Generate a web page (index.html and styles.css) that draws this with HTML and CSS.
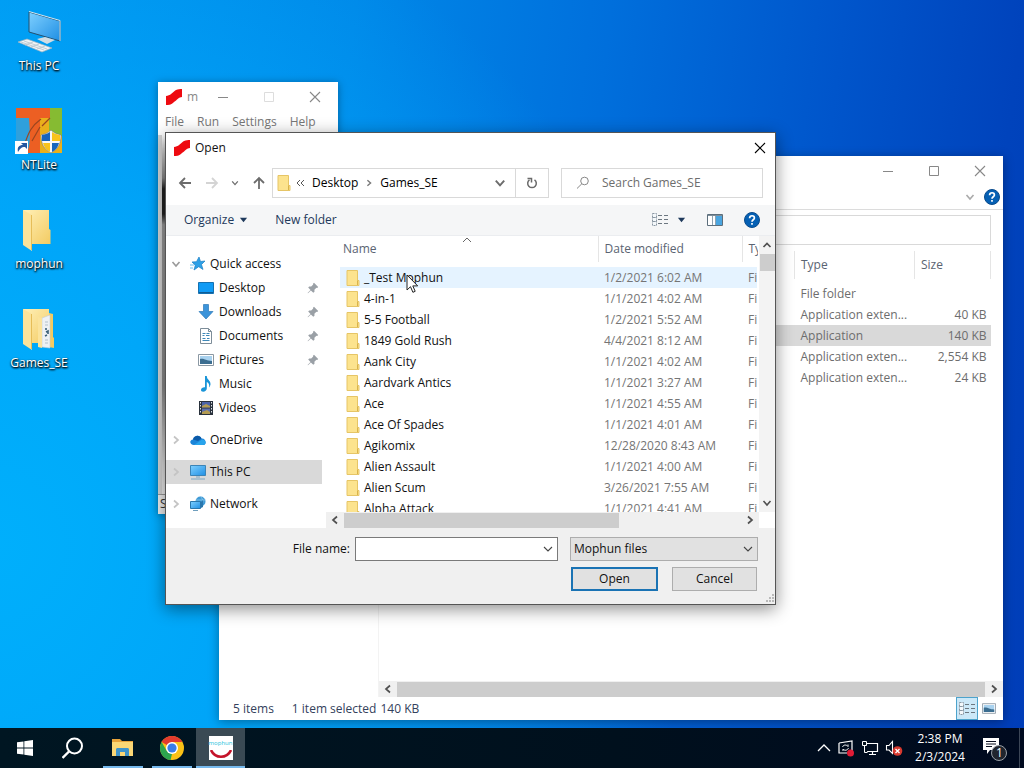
FILE: index.html
```
<!DOCTYPE html>
<html lang="en">
<head>
  <meta charset="UTF-8" />
  <meta name="viewport" content="width=device-width, initial-scale=1.0">
  <title>Open</title>
  <link rel="stylesheet" href="styles.css">
</head>
<body>
  <!-- shared icons -->
  <svg class="defs" aria-hidden="true">
    <defs>
      <linearGradient id="gFolder" x1="0" y1="0" x2="1" y2="1"><stop offset="0" stop-color="#fff0b8"/><stop offset="1" stop-color="#f3cb62"/></linearGradient>
      <linearGradient id="gScreen" x1="0" y1="0" x2="1" y2="1"><stop offset="0" stop-color="#7fd0ff"/><stop offset="1" stop-color="#1f8fe4"/></linearGradient>
    </defs>
    <symbol id="i-folder" viewBox="0 0 14 16"><path d="M1 .5h10.500v10h1.500v5H1z" fill="#fce38e" stroke="#e6c566"/><path d="M11.500 10.500V15" stroke="#d9b34a"/></symbol>
    <symbol id="i-mophun" viewBox="0 0 18 18"><path d="M1 8c4 0 7-4 10-6 2-1 4-1 6-1v8c-3 0-5 3-8 5-3 3-5 3-8 3z" fill="#ee0a10"/></symbol>
    <symbol id="i-close" viewBox="0 0 12 12"><path d="M1 1l10 10M11 1L1 11" fill="none" stroke="currentColor" stroke-width="1.100"/></symbol>
    <symbol id="i-min" viewBox="0 0 12 12"><path d="M1 6.500h10" stroke="currentColor"/></symbol>
    <symbol id="i-max" viewBox="0 0 12 12"><path d="M1.500 1.500h9v9h-9z" fill="none" stroke="currentColor"/></symbol>
    <symbol id="i-down" viewBox="0 0 10 10"><path d="M1.500 3l3.500 4 3.500-4" fill="none" stroke="currentColor" stroke-width="1.600"/></symbol>
    <symbol id="i-thin" viewBox="0 0 10 10"><path d="M1 3l4 4 4-4" fill="none" stroke="currentColor" stroke-width="1.100"/></symbol>
    <symbol id="i-up" viewBox="0 0 10 10"><path d="M1.500 7L5 3.500 8.500 7" fill="none" stroke="currentColor" stroke-width="1.700"/></symbol>
    <symbol id="i-left" viewBox="0 0 10 10"><path d="M7 1.500L3 5l4 3.500" fill="none" stroke="currentColor" stroke-width="1.700"/></symbol>
    <symbol id="i-right" viewBox="0 0 10 10"><path d="M3 1.500L7 5 3 8.500" fill="none" stroke="currentColor" stroke-width="1.700"/></symbol>
    <symbol id="i-arrow" viewBox="0 0 14 14"><path d="M13 7H2M7 2L2 7l5 5" fill="none" stroke="currentColor" stroke-width="1.800"/></symbol>
    <symbol id="i-tri" viewBox="0 0 10 6"><path d="M1 .5h8L5 5.500z" fill="currentColor"/></symbol>
    <symbol id="i-help" viewBox="0 0 16 16"><circle cx="8" cy="8" r="7.500" fill="#0560b4" stroke="#0a4b8c"/><path d="M5.600 6.200C5.700 3 10.400 3 10.400 5.900 10.400 7.700 8 7.800 8 9.800M8 11v1.700" fill="none" stroke="#fff" stroke-width="1.700"/></symbol>
    <symbol id="i-list" viewBox="0 0 17 14"><path d="M.5.500h4v4h-4zM.5 4.500h4v4h-4zM.5 8.500h4v4h-4z" fill="#f4f8fb" stroke="#8a97a2" stroke-dasharray="2 1"/><path d="M6 2.500h4M12 2.500h4M6 6.500h4M12 6.500h4M6 10.500h4M12 10.500h4" stroke="#6c7780"/></symbol>
    <symbol id="i-pic" viewBox="0 0 16 12"><path d="M.5.500h15v11H.5z" fill="#fff" stroke="#8b98a3"/><path d="M2 2h12v8H2z" fill="#a9d2ef"/><path d="M2 5c4-1 6 2 12 2v3H2z" fill="#3b6d90"/></symbol>
    <symbol id="i-pin" viewBox="0 0 12 12"><path d="M7 .8L11.200 5l-1 1-.8-.2-2 2 .1 2-1.200 1-2.400-2.400L1 11.300l-.4-.4 2.900-3L1.200 5.600l1-1.100 2 .1 2-2L6 1.800z" fill="#9aa0a6"/></symbol>
    <symbol id="i-pc" viewBox="0 0 18 16"><path d="M1.500 1.500h15v10h-15z" fill="url(#gScreen)" stroke="#3b84b7"/><path d="M2 15h14M7 13h4" stroke="#7aa7c4"/></symbol>
    <symbol id="i-bigfolder" viewBox="0 0 48 48"><path d="M8 4h26v19l1.500 1v14H17z" fill="url(#gFolder)"/><path d="M8 4l9 5v36l-9-6z" fill="#fbe39b"/><path d="M16.500 9v35" stroke="#e6bd58" stroke-width="1"/></symbol>
  </svg>

  <main class="desktop">
    <nav class="shortcuts">
      <a class="shortcut" href="#">
        <svg width="48" height="48" viewBox="0 0 48 48"><path d="M14 4l31 9v20L14 24z" fill="url(#gScreen)" stroke="#24506f"/><path d="M14 3.500l31 9V33" fill="none" stroke="#cfe8f5"/><path d="M22 31l8-2 10 3-8 4z" fill="#d3dde3"/><path d="M3 34l9-3 25 9-10 4z" fill="#f0f3f5" stroke="#9eb2c0" stroke-width=".7"/><path d="M6 34l23 8M9 33l23 8M10 37l8-3M16 39l8-3M22 41l8-3" stroke="#b4c3cd" stroke-width=".8"/></svg>
        <span>This PC</span>
      </a>
      <a class="shortcut" href="#">
        <svg width="48" height="48" viewBox="0 0 48 48"><path d="M1 1h46v45H1z" fill="#e9b01b"/><path d="M1 10h20v36H1z" fill="#2fa0dc"/><path d="M34 1h13v28H34z" fill="#86bb32"/><path d="M1 1h34v10H25v35H12c4-9 3-21 2-35H1z" fill="#ec5f23"/><path d="M10 36c3-8 5-16 16-24M17 34l8-14M35 11l-8 8" fill="none" stroke="#9b4620" stroke-width="1.200"/><path d="M36 23c4 4 7 4 10 5 0 9-3 14-10 18-7-4-10-9-10-18 3-1 6-1 10-5z" fill="#f7f7f7" stroke="#777" stroke-width=".6"/><path d="M35 25v9h-8c-.5-2 0-4 0-6 3-1 5-1 8-3zM37 36h7c-1 4-3 7-7 9z" fill="#1765bd"/><path d="M37 25v9h8v-6c-3-1-5-1-8-3zM35 36h-7c1 4 3 7 7 9z" fill="#f8c31c"/><path d="M0 34h13v13H0z" fill="#fff"/><path d="M3 45c-1-5 1-7 5-7l-2-2h6v6l-2-2c-4 0-5 2-7 5z" fill="#2458a0"/></svg>
        <span>NTLite</span>
      </a>
      <a class="shortcut" href="#">
        <svg width="48" height="48"><use href="#i-bigfolder"/></svg>
        <span>mophun</span>
      </a>
      <a class="shortcut" href="#">
        <svg width="48" height="48" viewBox="0 0 48 48"><use href="#i-bigfolder" width="48" height="48"/><path d="M34 8l4 1v23l1 1v10l-5-1z" fill="#f3cb62"/><path d="M27 13l8-3v33l-8-1z" fill="#eef1f4" stroke="#c5ccd2" stroke-width=".6"/><path d="M23 12l4 1v30l-4-1z" fill="#fbe39b"/><path d="M30 17h3M30 20h3M30 35h3M30 38h3" stroke="#b3c0cb"/><path d="M31 23v2M31 27l2-1v3M30 31l2-1" fill="none" stroke="#3b6078" stroke-width="1.600"/></svg>
        <span>Games_SE</span>
      </a>
    </nav>

    <!-- file explorer behind everything -->
    <section class="window explorer">
      <header class="caption">
        <button aria-label="Minimize"><svg width="12" height="12"><use href="#i-min"/></svg></button>
        <button aria-label="Maximize"><svg width="12" height="12"><use href="#i-max"/></svg></button>
        <button aria-label="Close"><svg width="12" height="12"><use href="#i-close"/></svg></button>
      </header>
      <div class="ribbon">
        <button aria-label="Expand ribbon"><svg width="10" height="10"><use href="#i-down"/></svg></button>
        <button aria-label="Help"><svg width="16" height="16"><use href="#i-help"/></svg></button>
      </div>
      <div class="address-row"><input type="text" aria-label="Search"></div>
      <div class="explorer-body">
        <div class="explorer-nav"></div>
        <div class="explorer-main">
          <table class="details">
            <colgroup><col><col class="col-kind"><col class="col-size"></colgroup>
            <thead><tr><th></th><th>Type</th><th>Size</th></tr></thead>
            <tbody>
              <tr><td></td><td>File folder</td><td></td></tr>
              <tr><td></td><td>Application exten...</td><td>40 KB</td></tr>
              <tr class="picked"><td></td><td>Application</td><td>140 KB</td></tr>
              <tr><td></td><td>Application exten...</td><td>2,554 KB</td></tr>
              <tr><td></td><td>Application exten...</td><td>24 KB</td></tr>
            </tbody>
          </table>
          <div class="hscroll">
            <svg width="18" height="10"><use href="#i-left"/></svg>
            <span class="thumb full"></span>
            <svg width="18" height="10"><use href="#i-right"/></svg>
          </div>
        </div>
      </div>
      <footer class="statusbar">
        <span>5 items</span>
        <span class="selection">1 item selected</span>
        <span>140 KB</span>
        <div class="views">
          <button class="on" aria-label="Details"><svg width="17" height="14"><use href="#i-list"/></svg></button>
          <button aria-label="Large icons"><svg width="14" height="11"><use href="#i-pic"/></svg></button>
        </div>
      </footer>
    </section>

    <!-- emulator window -->
    <section class="window emulator">
      <header class="caption">
        <svg class="logo" width="18" height="18"><use href="#i-mophun"/></svg>
        <span class="title">m</span>
        <button aria-label="Minimize"><svg width="12" height="12"><use href="#i-min"/></svg></button>
        <button aria-label="Maximize" disabled><svg width="12" height="12"><use href="#i-max"/></svg></button>
        <button aria-label="Close"><svg width="12" height="12"><use href="#i-close"/></svg></button>
      </header>
      <nav class="menubar">
        <a href="#">File</a><a href="#">Run</a><a href="#">Settings</a><a href="#">Help</a>
      </nav>
      <div class="canvas"></div>
      <footer class="emu-status">S</footer>
    </section>

    <!-- open dialog -->
    <form class="window dialog">
      <header class="dialog-title">
        <svg width="18" height="18"><use href="#i-mophun"/></svg>
        <span>Open</span>
        <button type="button" aria-label="Close"><svg width="12" height="12"><use href="#i-close"/></svg></button>
      </header>

      <div class="navrow">
        <div class="history">
          <button type="button" aria-label="Back"><svg width="14" height="14"><use href="#i-arrow"/></svg></button>
          <button type="button" class="faded" aria-label="Forward"><svg class="flip" width="14" height="14"><use href="#i-arrow"/></svg></button>
          <button type="button" aria-label="Recent"><svg width="8" height="8"><use href="#i-down"/></svg></button>
          <button type="button" aria-label="Up"><svg class="turn" width="14" height="14"><use href="#i-arrow"/></svg></button>
        </div>
        <div class="breadcrumb">
          <svg width="14" height="16"><use href="#i-folder"/></svg>
          <svg class="crumb-more" width="9" height="8" viewBox="0 0 9 8"><path d="M4 1L1 4l3 3M8 1L5 4l3 3" fill="none" stroke="#555"/></svg>
          <a href="#">Desktop</a>
          <svg class="crumb-sep" width="8" height="8"><use href="#i-right"/></svg>
          <a href="#">Games_SE</a>
          <button type="button" class="drop" aria-label="Previous locations"><svg width="12" height="12"><use href="#i-down"/></svg></button>
          <button type="button" class="refresh" aria-label="Refresh"><svg width="12" height="12" viewBox="0 0 12 12"><path d="M8.500 2.800A4.300 4.300 0 1 1 3.500 2.800" fill="none" stroke="#6a6a6a" stroke-width="1.500"/><path d="M1.500 1.500h4v4" fill="none" stroke="#6a6a6a" stroke-width="1.500"/></svg></button>
        </div>
        <label class="search">
          <svg width="14" height="14" viewBox="0 0 14 14"><circle cx="8.500" cy="5" r="3.800" fill="none" stroke="#888"/><path d="M5.800 7.800L1 12.500" stroke="#888"/></svg>
          <input type="search" placeholder="Search Games_SE" aria-label="Search Games_SE">
        </label>
      </div>

      <div class="toolbar">
        <button type="button">Organize <svg width="9" height="6"><use href="#i-tri"/></svg></button>
        <button type="button">New folder</button>
        <button type="button" class="view" aria-label="Change your view"><svg width="17" height="14"><use href="#i-list"/></svg><svg width="9" height="6"><use href="#i-tri"/></svg></button>
        <button type="button" aria-label="Preview pane"><svg width="16" height="12" viewBox="0 0 16 12"><path d="M.5.500h15v11H.5z" fill="#fff" stroke="#5c6e7c"/><path d="M1 1.500h14" stroke="#7e8e9a"/><path d="M9 2h6v9H9z" fill="#4aa5e0"/><path d="M5.500 2v9M8.500 2v9" stroke="#8fa3b1"/></svg></button>
        <button type="button" aria-label="Help"><svg width="16" height="16"><use href="#i-help"/></svg></button>
      </div>

      <div class="panes">
        <nav class="tree">
          <a class="root" href="#"><svg class="twist open" width="10" height="10"><use href="#i-down"/></svg><svg width="16" height="16" viewBox="0 0 16 16"><path d="M9 1l1.500 4.500L15 5l-3.500 3.500 1.500 5-4.300-2.800L4 14l1.300-4.800L2 6l4.500-.3z" fill="#2da0e6" stroke="#1a7fc6" stroke-width=".7"/><path d="M0 9h4M0 12h3" stroke="#6cc0f0"/></svg>Quick access</a>
          <a class="leaf" href="#"><svg width="16" height="16" viewBox="0 0 16 16"><path d="M.5 2.500h15v11H.5z" fill="#109bf5" stroke="#1671b0"/><path d="M1 12.500h14" stroke="#0f5c95"/></svg>Desktop<svg class="pin" width="12" height="12"><use href="#i-pin"/></svg></a>
          <a class="leaf" href="#"><svg width="16" height="16" viewBox="0 0 16 16"><path d="M5.500.500h5v7h4.500L8 15 1 7.500h4.500z" fill="#3c94da" stroke="#2d78b8" stroke-width=".7"/></svg>Downloads<svg class="pin" width="12" height="12"><use href="#i-pin"/></svg></a>
          <a class="leaf" href="#"><svg width="16" height="16" viewBox="0 0 16 16"><path d="M2.500.500h8l3 3v12h-11z" fill="#fff" stroke="#7d8d99"/><path d="M10.500.500v3h3" fill="none" stroke="#7d8d99"/><path d="M4.500 5.500h3M8.500 5.500h3M4.500 7.500h2M8 7.500h3.500M4.500 10.500h3M9 10.500h2.500M4.500 12.500h7" stroke="#3e88b8"/></svg>Documents<svg class="pin" width="12" height="12"><use href="#i-pin"/></svg></a>
          <a class="leaf" href="#"><svg width="16" height="12"><use href="#i-pic"/></svg>Pictures<svg class="pin" width="12" height="12"><use href="#i-pin"/></svg></a>
          <a class="leaf" href="#"><svg width="16" height="16" viewBox="0 0 16 16"><path d="M7 0h1.800c0 4 4 4 3.700 8.500-.2 1.300-.8 2.300-1.500 3 .8-3-.4-4.500-2.200-5.500v6.500c0 2-1.800 3.200-3.600 3.200-1.500 0-2.400-.8-2.200-2 .2-1.700 2-2.700 4-2.400z" fill="#1a95d8"/></svg>Music</a>
          <a class="leaf" href="#"><svg width="16" height="16" viewBox="0 0 16 16"><path d="M1 1h14v14H1z" fill="#29313c"/><path d="M4 2h8v5.500H4z" fill="#4c63a8"/><path d="M4 8.500h8V14H4z" fill="#5d6fae"/><path d="M4 6l4-2 4 2v1.500H4zM4 12l5-2 3 2v2H4z" fill="#b39b52"/><path d="M2.500 2v12M13.500 2v12" stroke="#dfe3e8" stroke-dasharray="1.500 1.500"/></svg>Videos</a>
          <a class="root gap" href="#"><svg class="twist" width="10" height="10"><use href="#i-right"/></svg><svg width="16" height="16" viewBox="0 0 16 16"><path d="M4 13C-.5 13-1 8 3 7.500 4 3 10 2.500 11.500 6.500 16 6 17.500 13 13 13z" fill="#1b84d8"/><path d="M3 7.500C4 3 10 2.500 11.500 6.500L8 9z" fill="#0c5aa8"/><path d="M4 13l8-5.500c4-.5 5 5.500 1 5.500z" fill="#28a4ec"/></svg>OneDrive</a>
          <a class="root gap current" href="#"><svg class="twist" width="10" height="10"><use href="#i-right"/></svg><svg width="16" height="16" viewBox="1 0 16 16"><use href="#i-pc" width="18" height="16"/></svg>This PC</a>
          <a class="root gap" href="#"><svg class="twist" width="10" height="10"><use href="#i-right"/></svg><svg width="16" height="16" viewBox="0 0 16 16"><circle cx="10.500" cy="5.500" r="5" fill="#3f9ad6"/><path d="M10.500.500c3 3 3 7 0 10M6 4h9.500" fill="none" stroke="#8cc8ea" stroke-width=".8"/><path d="M.5 5.500h10v7H.5z" fill="url(#gScreen)" stroke="#2a77ad"/><path d="M13 4v7l-2 1V6z" fill="#2a77ad"/><path d="M3 14.500h5" stroke="#6f9ebd"/></svg>Network</a>
        </nav>

        <div class="filearea">
          <div class="filescroll">
            <table class="files">
              <colgroup><col class="col-name"><col class="col-date"><col></colgroup>
              <thead><tr><th class="sorted">Name<svg width="10" height="8"><path d="M1 6l4-4 4 4" fill="none" stroke="#666"/></svg></th><th>Date modified</th><th>Type</th></tr></thead>
              <tbody>
                <tr class="hover"><td><svg width="14" height="16"><use href="#i-folder"/></svg>_Test Mophun</td><td>1/2/2021 6:02 AM</td><td>File folder</td></tr>
                <tr><td><svg width="14" height="16"><use href="#i-folder"/></svg>4-in-1</td><td>1/1/2021 4:02 AM</td><td>File folder</td></tr>
                <tr><td><svg width="14" height="16"><use href="#i-folder"/></svg>5-5 Football</td><td>1/2/2021 5:52 AM</td><td>File folder</td></tr>
                <tr><td><svg width="14" height="16"><use href="#i-folder"/></svg>1849 Gold Rush</td><td>4/4/2021 8:12 AM</td><td>File folder</td></tr>
                <tr><td><svg width="14" height="16"><use href="#i-folder"/></svg>Aank City</td><td>1/1/2021 4:02 AM</td><td>File folder</td></tr>
                <tr><td><svg width="14" height="16"><use href="#i-folder"/></svg>Aardvark Antics</td><td>1/1/2021 3:27 AM</td><td>File folder</td></tr>
                <tr><td><svg width="14" height="16"><use href="#i-folder"/></svg>Ace</td><td>1/1/2021 4:55 AM</td><td>File folder</td></tr>
                <tr><td><svg width="14" height="16"><use href="#i-folder"/></svg>Ace Of Spades</td><td>1/1/2021 4:01 AM</td><td>File folder</td></tr>
                <tr><td><svg width="14" height="16"><use href="#i-folder"/></svg>Agikomix</td><td>12/28/2020 8:43 AM</td><td>File folder</td></tr>
                <tr><td><svg width="14" height="16"><use href="#i-folder"/></svg>Alien Assault</td><td>1/1/2021 4:00 AM</td><td>File folder</td></tr>
                <tr><td><svg width="14" height="16"><use href="#i-folder"/></svg>Alien Scum</td><td>3/26/2021 7:55 AM</td><td>File folder</td></tr>
                <tr><td><svg width="14" height="16"><use href="#i-folder"/></svg>Alpha Attack</td><td>1/1/2021 4:41 AM</td><td>File folder</td></tr>
              </tbody>
            </table>
          </div>
          <div class="vscroll">
            <svg width="10" height="18"><use href="#i-up"/></svg>
            <span class="thumb"></span>
            <svg width="10" height="18"><use href="#i-down"/></svg>
          </div>
          <div class="hscroll">
            <svg width="18" height="10"><use href="#i-left"/></svg>
            <span class="thumb"></span>
            <svg width="18" height="10"><use href="#i-right"/></svg>
          </div>
        </div>
      </div>

      <footer class="dialog-footer">
        <label for="filename">File name:</label>
        <div class="combo">
          <input type="text" id="filename" name="filename">
          <button type="button" aria-label="Recent names"><svg width="10" height="10"><use href="#i-thin"/></svg></button>
        </div>
        <div class="filter">
          <select aria-label="File type"><option>Mophun files</option></select>
          <svg width="10" height="10"><use href="#i-thin"/></svg>
        </div>
        <div class="actions">
          <button type="submit" class="primary">Open</button>
          <button type="button">Cancel</button>
        </div>
        <svg class="grip" width="9" height="9" viewBox="0 0 9 9"><path d="M7 0h2v2H7zM7 3h2v2H7zM7 6h2v2H7zM4 3h2v2H4zM4 6h2v2H4zM1 6h2v2H1z" fill="#b9b9b9"/></svg>
      </footer>
    </form>

    <svg class="cursor" width="13" height="20" viewBox="0 0 13 20"><path d="M1 1v15l3.500-3.300 2.400 5.600 2.300-1-2.400-5.400h4.900z" fill="#fff" stroke="#222"/></svg>
  </main>

  <footer class="taskbar">
    <button aria-label="Start"><svg width="16" height="16" viewBox="0 0 16 16"><path d="M0 2.300l6.500-.9v6.200H0zM7.300 1.300L16 0v7.600H7.300zM0 8.400h6.500v6.200L0 13.700zM7.300 8.400H16V16l-8.700-1.300z" fill="#fff"/></svg></button>
    <button aria-label="Search"><svg width="24" height="24" viewBox="1 0 24 24"><circle cx="13.500" cy="10" r="7.500" fill="none" stroke="#fff" stroke-width="2"/><path d="M8 15.500L1.500 22" stroke="#fff" stroke-width="2.400"/></svg></button>
    <button class="running" aria-label="File Explorer"><svg width="24" height="24" viewBox="0 0 24 24"><path d="M1 3h8l2 2h11v4H1z" fill="#e8a33a"/><path d="M1 6h21v14H1z" fill="#fbd775"/><path d="M5 20v-6.500C5 12 6 12 7 12h9c1 0 2 0 2 1.500V20h-4v-4H9v4z" fill="#3f94cb"/></svg></button>
    <button class="running" aria-label="Chrome"><svg width="24" height="24" viewBox="0 0 24 24"><circle cx="12" cy="12" r="12" fill="#fbc116"/><path d="M12 12L1.600 6A12 12 0 0 1 22.400 6H12z" fill="#e33b2e"/><path d="M1.600 6l5.200 9L12 18l-1.500 6A12 12 0 0 1 1.600 6z" fill="#2da44e"/><circle cx="12" cy="12" r="6" fill="#fff"/><circle cx="12" cy="12" r="4.600" fill="#3a7de8"/></svg></button>
    <button class="running active" aria-label="mophun"><span class="mophun-tile"><span>mophun</span><svg width="22" height="10" viewBox="0 0 22 10"><path d="M1 0c4 9 16 9 20 0" fill="none" stroke="#c4142a" stroke-width="2.600"/></svg></span></button>
    <div class="tray">
      <svg width="14" height="10" viewBox="0 0 14 10"><path d="M1 8l6-6 6 6" fill="none" stroke="#fff" stroke-width="1.300"/></svg>
      <svg width="18" height="18" viewBox="0 0 18 18"><path d="M2 4l13-2v12M2 4v10h8" fill="none" stroke="#fff" stroke-width="1.200"/><path d="M5.500 8c1-2.500 4-2.500 5.500-.5V5.500M11.500 9c-1 2.500-4 3-5.500 1v2" fill="none" stroke="#fff"/><circle cx="13.500" cy="14" r="3.500" fill="#e21c36"/></svg>
      <svg width="18" height="18" viewBox="0 0 18 18"><path d="M5 4.500h11.500v8H5.500M8 15.500h7M11.500 12.500v3" fill="none" stroke="#fff" stroke-width="1.200"/><path d="M1.500 2.500h4v4h-4zM3.500 6.500v7h3" fill="#06131f" stroke="#fff"/></svg>
      <svg width="18" height="18" viewBox="0 0 18 18"><path d="M1.500 6.500H4l3.500-4v12L4 11H1.500z" fill="none" stroke="#fff" stroke-width="1.100"/><circle cx="12.500" cy="12" r="4.800" fill="#d8392f"/><path d="M10.500 10l4 4M14.500 10l-4 4" stroke="#fff" stroke-width="1.300"/></svg>
      <time class="clock">2:38 PM<br>2/3/2024</time>
      <button class="action-center" aria-label="Notifications">
        <svg width="26" height="26" viewBox="0 0 26 26"><path d="M2 3h16v12H9l-3 4v-4H2z" fill="#fff"/><path d="M5 6.500h10M5 9h10M5 11.500h6" stroke="#0a1020"/><circle cx="18" cy="18" r="7.500" fill="#20252e" stroke="#99a0a8"/></svg>
        <span class="count">1</span>
      </button>
    </div>
  </footer>
</body>
</html>
```
FILE: styles.css
```
* {
  box-sizing: border-box;
}
body {
  margin: 0;
  height: 100vh;
  display: flex;
  flex-direction: column;
  overflow: hidden;
  font-family: "Open Sans", "Noto Sans", sans-serif;
  font-size: 12px;
  line-height: 16px;
  color: #111;
}
a {
  color: inherit;
  text-decoration: none;
}
button, input, select {
  font: inherit;
  color: inherit;
}
button {
  display: inline-flex;
  align-items: center;
  justify-content: center;
  padding: 0;
  border: none;
  background: none;
}
svg {
  flex: none;
}
.defs {
  position: absolute;
  width: 0;
  height: 0;
}

/* desktop */
.desktop {
  position: relative;
  flex: 1;
  min-height: 0;
  background:
    radial-gradient(circle at 0% 75%, rgba(0,178,253,0.9) 0%, rgba(0,172,253,0.7) 30%, rgba(0,150,245,0) 60%),
    linear-gradient(97deg, #0098f0 0%, #0088e8 32%, #006fdc 55%, #0055cb 76%, #0043bc 92%, #003db8 100%);
}
.shortcuts {
  display: grid;
  grid-auto-rows: 99px;
  width: 78px;
  padding-top: 8px;
}
.shortcut {
  display: flex;
  flex-direction: column;
  align-items: center;
  gap: 2px;
  color: #fff;
  text-shadow: 1px 1px 2px #000, 0 1px 2px #000;
}

/* windows */
.window {
  position: absolute;
  display: flex;
  flex-direction: column;
  background: #fff;
}
.caption {
  display: flex;
  align-items: center;
  height: 29px;
  color: #888;
}
.caption button {
  width: 46px;
  height: 29px;
}
.caption button:disabled {
  color: #ddd;
}

.explorer {
  left: 219px;
  top: 156px;
  width: 784px;
  height: 564px;
  color: #6d6d6d;
  box-shadow: 0 2px 10px rgba(0,0,0,0.35);
}
.explorer .caption {
  justify-content: flex-end;
}
.ribbon {
  display: flex;
  justify-content: flex-end;
  align-items: center;
  gap: 9px;
  height: 25px;
  padding-right: 3px;
  border-bottom: 1px solid #dcdcdc;
  color: #aaa;
}
.address-row {
  padding: 5px 12px;
}
.address-row input {
  display: block;
  width: 100%;
  height: 30px;
  border: 1px solid #d9d9d9;
}
.explorer-body {
  flex: 1;
  display: flex;
  min-height: 0;
}
.explorer-nav {
  width: 160px;
  border-right: 1px solid #f3f3f3;
}
.explorer-main {
  flex: 1;
  display: flex;
  flex-direction: column;
  justify-content: space-between;
}
.details {
  width: calc(100% - 12px);
  margin-top: 1px;
  table-layout: fixed;
  border-collapse: collapse;
}
.col-kind {
  width: 120px;
}
.col-size {
  width: 76px;
}
.details th {
  height: 28px;
  padding: 0 6px;
  border-right: 1px solid #e5e5e5;
  font-weight: normal;
  text-align: left;
  color: #5a6472;
}
.details td {
  height: 21px;
  padding: 0 4px 0 6px;
  white-space: nowrap;
}
.details td:last-child {
  text-align: right;
}
.details tbody::before {
  content: "";
  display: block;
  height: 4px;
}
.picked {
  background: #d9d9d9;
}
.hscroll {
  display: flex;
  align-items: center;
  height: 16px;
  background: #f0f0f0;
  color: #505050;
}
.thumb {
  background: #cdcdcd;
}
.hscroll .thumb {
  width: 275px;
  height: 15px;
}
.hscroll .full {
  flex: 1;
}
.statusbar {
  display: flex;
  align-items: center;
  height: 23px;
  padding: 0 3px 0 14px;
  color: #33415c;
}
.selection {
  margin: 0 4px 0 18px;
}
.views {
  display: flex;
  margin-left: auto;
}
.views button {
  width: 22px;
  height: 23px;
}
.views .on {
  background: #cce8f8;
  border: 1px solid #4da3cc;
}

.emulator {
  left: 158px;
  top: 82px;
  width: 180px;
  height: 432px;
  color: #777;
  box-shadow: 0 1px 8px rgba(0,0,0,0.35);
}
.logo {
  margin: 0 4px 0 7px;
}
.title {
  flex: 1;
}
.menubar {
  display: flex;
  gap: 13px;
  height: 24px;
  padding: 3px 7px;
}
.canvas {
  flex: 1;
  border-left: 4px solid #d4d4d4;
  background: linear-gradient(#fff 0%, #888 12%, #222 15%, #222 22%, #999 25%, #8a8a8a 70%, #ddd 92%, #eee 100%);
}
.emu-status {
  height: 20px;
  padding: 1px 2px;
  background: #eee;
  border-top: 1px solid #999;
  color: #333;
}

/* open dialog */
.dialog {
  left: 165px;
  top: 132px;
  width: 611px;
  border: 1px solid #555;
  box-shadow: 0 4px 16px rgba(0,0,0,0.45);
}
.dialog-title {
  display: flex;
  align-items: center;
  gap: 4px;
  height: 30px;
  padding: 0 9px 0 7px;
}
.dialog-title button {
  margin-left: auto;
  color: #000;
}
.navrow {
  display: flex;
  padding: 5px 12px 7px;
}
.history {
  display: flex;
  justify-content: space-between;
  width: 94px;
  padding-right: 6px;
  color: #6c6c6c;
}
.history .faded {
  color: #d4d4d4;
}
.flip {
  transform: rotate(180deg);
}
.turn {
  transform: rotate(90deg);
}
.breadcrumb {
  display: flex;
  align-items: center;
  flex: 1;
  height: 30px;
  padding-left: 4px;
  border: 1px solid #d9d9d9;
  color: #000;
}
.crumb-more {
  margin: 0 7px 0 5px;
}
.crumb-sep {
  margin: 0 7px;
  color: #777;
}
.drop {
  width: 30px;
  margin-left: auto;
  color: #6c6c6c;
}
.refresh {
  width: 33px;
  height: 28px;
  border-left: 1px solid #d9d9d9;
}
.search {
  display: flex;
  align-items: center;
  gap: 10px;
  width: 202px;
  margin-left: 12px;
  padding-left: 14px;
  border: 1px solid #d9d9d9;
}
.search input {
  width: 140px;
  padding: 0 2px;
  border: none;
  outline: none;
}
.search input::placeholder {
  color: #6d6d6d;
}
.toolbar {
  display: flex;
  align-items: center;
  gap: 27px;
  height: 31px;
  padding: 0 15px 0 18px;
  background: #f5f6f7;
  border-bottom: 1px solid #ebedf0;
  color: #1e395b;
}
.toolbar button {
  gap: 5px;
}
.toolbar .view {
  gap: 8px;
  margin-left: auto;
}
.toolbar .view ~ button {
  margin-left: -6px;
}
.panes {
  display: flex;
  height: 292px;
}
.tree {
  width: 156px;
  padding-top: 16px;
}
.tree a {
  display: flex;
  align-items: center;
  height: 24px;
  gap: 5px;
}
.tree .root {
  gap: 4px;
  padding-left: 5px;
}
.root .twist {
  margin-right: 5px;
  color: #c4c4c4;
}
.root .open {
  color: #999;
}
.leaf {
  padding: 0 3px 0 32px;
}
.tree .gap {
  margin-top: 8px;
}
.current {
  background: #d9d9d9;
}
.pin {
  margin-left: auto;
}
.filearea {
  flex: 1;
  display: grid;
  grid-template-columns: 1fr 16px;
  grid-template-rows: 1fr 16px;
  min-width: 0;
  margin-left: 4px;
}
.filescroll {
  overflow: hidden;
  min-height: 0;
  padding-left: 14px;
}
.files {
  width: 100%;
  table-layout: fixed;
  border-collapse: collapse;
}
.col-name {
  width: 258px;
}
.col-date {
  width: 144px;
}
.files th {
  height: 26px;
  padding: 0 2px 0 6px;
  border-right: 1px solid #e5e5e5;
  font-weight: normal;
  text-align: left;
  white-space: nowrap;
  overflow: hidden;
  color: #5a6472;
}
.files th:last-child {
  border-right: none;
}
.files .sorted {
  position: relative;
  padding-left: 3px;
}
.sorted svg {
  position: absolute;
  top: 0;
  left: 122px;
}
.files tbody::before {
  content: "";
  display: block;
  height: 5px;
}
.files td {
  height: 21px;
  padding: 0 0 0 6px;
  overflow: hidden;
  white-space: nowrap;
  color: #757575;
}
/* the last column is cut by the scrollbar, keep a thin margin there */
.files td:last-child {
  border-right: 2px solid transparent;
  overflow: clip;
  overflow-clip-margin: content-box;
}
.files td:first-child {
  color: #111;
}
.files td svg {
  margin-right: 4px;
  vertical-align: top;
}
.hover {
  background: #e5f3ff;
}
.vscroll {
  display: flex;
  flex-direction: column;
  align-items: center;
  background: #f3f3f3;
  color: #505050;
}
.vscroll .thumb {
  width: 15px;
  height: 17px;
  margin-bottom: auto;
}
.filearea .hscroll svg:last-child {
  margin-left: auto;
}
.dialog-footer {
  position: relative;
  display: grid;
  grid-template-columns: 1fr 203px 188px;
  gap: 6px 12px;
  align-items: center;
  padding: 9px 17px 13px;
  background: #f0f0f0;
}
.dialog-footer label {
  margin-right: -7px;
  text-align: right;
}
.combo {
  display: flex;
  height: 24px;
  border: 1px solid #7a7a7a;
  background: #fff;
  color: #444;
}
.combo input {
  flex: 1;
  min-width: 0;
  border: none;
  outline: none;
}
.combo button {
  width: 18px;
}
.filter {
  display: flex;
  align-items: center;
  height: 24px;
  padding-right: 4px;
  background: #e1e1e1;
  border: 1px solid #adadad;
}
.filter svg {
  color: #444;
}
.filter select {
  flex: 1;
  padding-left: 3px;
  border: none;
  background: none;
  appearance: none;
}
.actions {
  grid-column: 3;
  display: flex;
  gap: 14px;
  padding: 0 1px;
}
.actions button {
  flex: 1;
  height: 24px;
  background: #e1e1e1;
  border: 1px solid #adadad;
}
.actions .primary {
  border: 2px solid #1a73b4;
}
.grip {
  position: absolute;
  right: 1px;
  bottom: 1px;
}
.cursor {
  position: absolute;
  left: 406px;
  top: 274px;
}

/* taskbar */
.taskbar {
  position: relative;
  display: flex;
  height: 40px;
  background: linear-gradient(90deg, #001622, #00101d 60%, #000a1f);
  color: #fff;
}
.taskbar > button {
  position: relative;
  width: 49px;
}
.running::after {
  content: "";
  position: absolute;
  left: 5px;
  right: 4px;
  bottom: 0;
  height: 2px;
  background: #76b9ed;
}
.active {
  background: #3a4a54;
}
.active::after {
  left: 0;
  right: 0;
}
.mophun-tile {
  display: flex;
  flex-direction: column;
  align-items: center;
  width: 24px;
  height: 24px;
  background: #fff;
  color: #25c3dc;
  font-size: 6px;
  line-height: 14px;
}
.tray {
  display: flex;
  align-items: center;
  gap: 6px;
  margin-left: auto;
  margin-right: 4px;
  padding-right: 12px;
  border-right: 1px solid #3c4656;
}
.clock {
  width: 62px;
  line-height: 18px;
  text-align: center;
}
.action-center {
  position: relative;
  margin-left: 4px;
}
.count {
  position: absolute;
  left: 15px;
  top: 10px;
}
```
